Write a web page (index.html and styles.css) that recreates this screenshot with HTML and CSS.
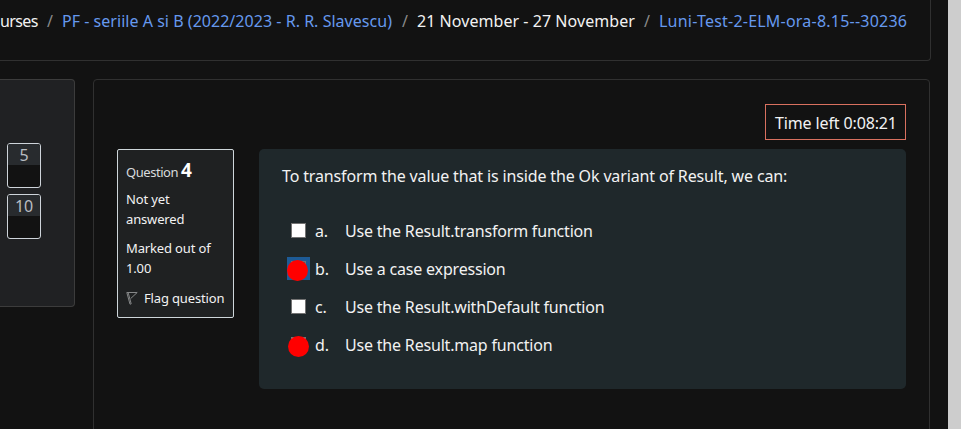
FILE: index.html
```html
<!DOCTYPE html>
<html lang="en">
<head>
<meta charset="utf-8">
<title>Quiz</title>
<link rel="stylesheet" href="styles.css">
</head>
<body>
<div class="page">
  <header class="crumbs">
    <span class="crumb crumb-first">urses</span><span class="sep">/</span>
    <a class="crumb crumb-course">PF - seriile A si B (2022/2023 - R. R. Slavescu)</a><span class="sep">/</span>
    <span class="crumb crumb-week">21 November - 27 November</span><span class="sep">/</span>
    <a class="crumb crumb-quiz">Luni-Test-2-ELM-ora-8.15--30236</a>
  </header>
  <div class="columns">
    <aside class="nav">
      <div class="navbtn"><span>5</span></div>
      <div class="navbtn"><span>10</span></div>
    </aside>
    <main class="main">
      <div class="timer"><span>Time left 0:08:21</span></div>
      <div class="question">
        <section class="info">
          <h3 class="no">Question <b>4</b></h3>
          <div class="state">Not yet<br>answered</div>
          <div class="grade">Marked out of<br>1.00</div>
          <div class="flag">
            <svg width="12" height="14" viewBox="0 0 12 14" fill="none" stroke="#858788" stroke-width="1"><path d="M.8 1.5L4 13.2L5.2 12.8L2.2 1.8M.8 1.5H11.2L4.6 7.6"/></svg>
            <span>Flag question</span>
          </div>
        </section>
        <section class="content">
          <p class="qtext">To transform the value that is inside the Ok variant of Result, we can:</p>
          <div class="answers">
            <div class="row"><i class="box"></i><span class="letter">a.</span><span>Use the Result.transform function</span></div>
            <div class="row"><i class="box focus"><i class="dot"></i></i><span class="letter">b.</span><span>Use a case expression</span></div>
            <div class="row"><i class="box"></i><span class="letter">c.</span><span>Use the Result.withDefault function</span></div>
            <div class="row"><i class="box"><i class="dot dot-low"></i></i><span class="letter">d.</span><span>Use the Result.map function</span></div>
          </div>
        </section>
      </div>
    </main>
  </div>
</div>
<div class="scrollbar"></div>
</body>
</html>
```
FILE: styles.css
```css
* { box-sizing: border-box; }
body {
  margin: 0;
  width: 961px;
  height: 429px;
  overflow: hidden;
  display: flex;
  background: #121212;
  color: #f2f2f2;
  font: 16px/24px "Noto Sans", "Open Sans", sans-serif;
  letter-spacing: -0.19px;
  white-space: nowrap;
}
.page { width: 948px; }
.scrollbar { width: 13px; background: #cdcdcd; }
.crumbs {
  display: flex;
  width: 931px;
  height: 61px;
  padding-top: 9px;
  border: solid #303030;
  border-width: 0 1px 1px 0;
  border-radius: 0 0 4px 0;
}
.crumb-first { width: 38px; letter-spacing: -0.6px; }
.crumb-course { width: 331px; letter-spacing: 0.03px; }
.crumb-week { width: 218px; letter-spacing: 0.05px; }
.crumb-quiz { letter-spacing: 0.22px; }
.crumbs a { color: #6699ee; }
.sep { width: 24px; text-align: center; color: #8a8a8a; }
.columns { display: flex; margin-top: 18px; gap: 18px; height: 350px; }
.nav {
  width: 75px;
  height: 228px;
  padding: 63px 0 0 7px;
  display: flex;
  flex-direction: column;
  gap: 6px;
  background: #202123;
  border: 1px solid #3c3c3c;
  border-left: 0;
  border-radius: 0 4px 4px 0;
}
.navbtn {
  width: 34px;
  height: 45px;
  border: 1px solid #ced4da;
  border-radius: 3px;
  background: #121212;
  overflow: hidden;
}
.navbtn span {
  display: block;
  height: 21px;
  line-height: 22px;
  text-align: center;
  background: #282b2e;
  color: #b9bdc2;
}
.main {
  width: 837px;
  height: 370px;
  padding: 24px 23px;
  border: 1px solid #303030;
  border-radius: 4px;
}
.timer {
  width: 141px;
  height: 36px;
  margin-left: auto;
  padding: 6px 0 0 9px;
  border: 1px solid #d9705f;
  letter-spacing: -0.13px;
}
.question { display: flex; margin-top: 9px; gap: 25px; }
.info {
  width: 117px;
  height: 169px;
  padding: 8px;
  border: 1px solid #ced6da;
  border-radius: 2px;
  background: #1f2122;
  font-size: 13px;
  line-height: 20px;
  letter-spacing: -0.15px;
}
.no { margin: 0; font-size: 13px; font-weight: 400; line-height: 24px; height: 31px; letter-spacing: -0.45px; color: #d8dbdc; }
.no b { font-size: 19px; color: #fff; }
.state, .grade { margin-bottom: 9px; }
.flag { display: flex; align-items: center; gap: 6px; margin-top: 10px; }
.flag svg { flex: none; }
.content {
  width: 647px;
  height: 240px;
  padding: 15px 22px 15px 23px;
  border-radius: 5px;
  background: #1f282b;
}
.qtext { margin: 0 0 31px; letter-spacing: -0.14px; }
.answers { display: grid; row-gap: 14px; }
.row { display: flex; align-items: center; height: 24px; padding-left: 9px; }
.box {
  position: relative;
  top: -1px;
  width: 15px;
  height: 15px;
  border: 1px solid #737373;
  background: #fff;
}
.focus { background: #2f5e8e; box-shadow: 0 0 0 4px #1d5b96; }
.dot { position: absolute; left: -5px; top: -2px; width: 21px; height: 21px; border-radius: 50%; background: #f00; }
.dot-low { left: -4px; top: -2px; }
.letter { width: 30px; margin-left: 9px; }
```
